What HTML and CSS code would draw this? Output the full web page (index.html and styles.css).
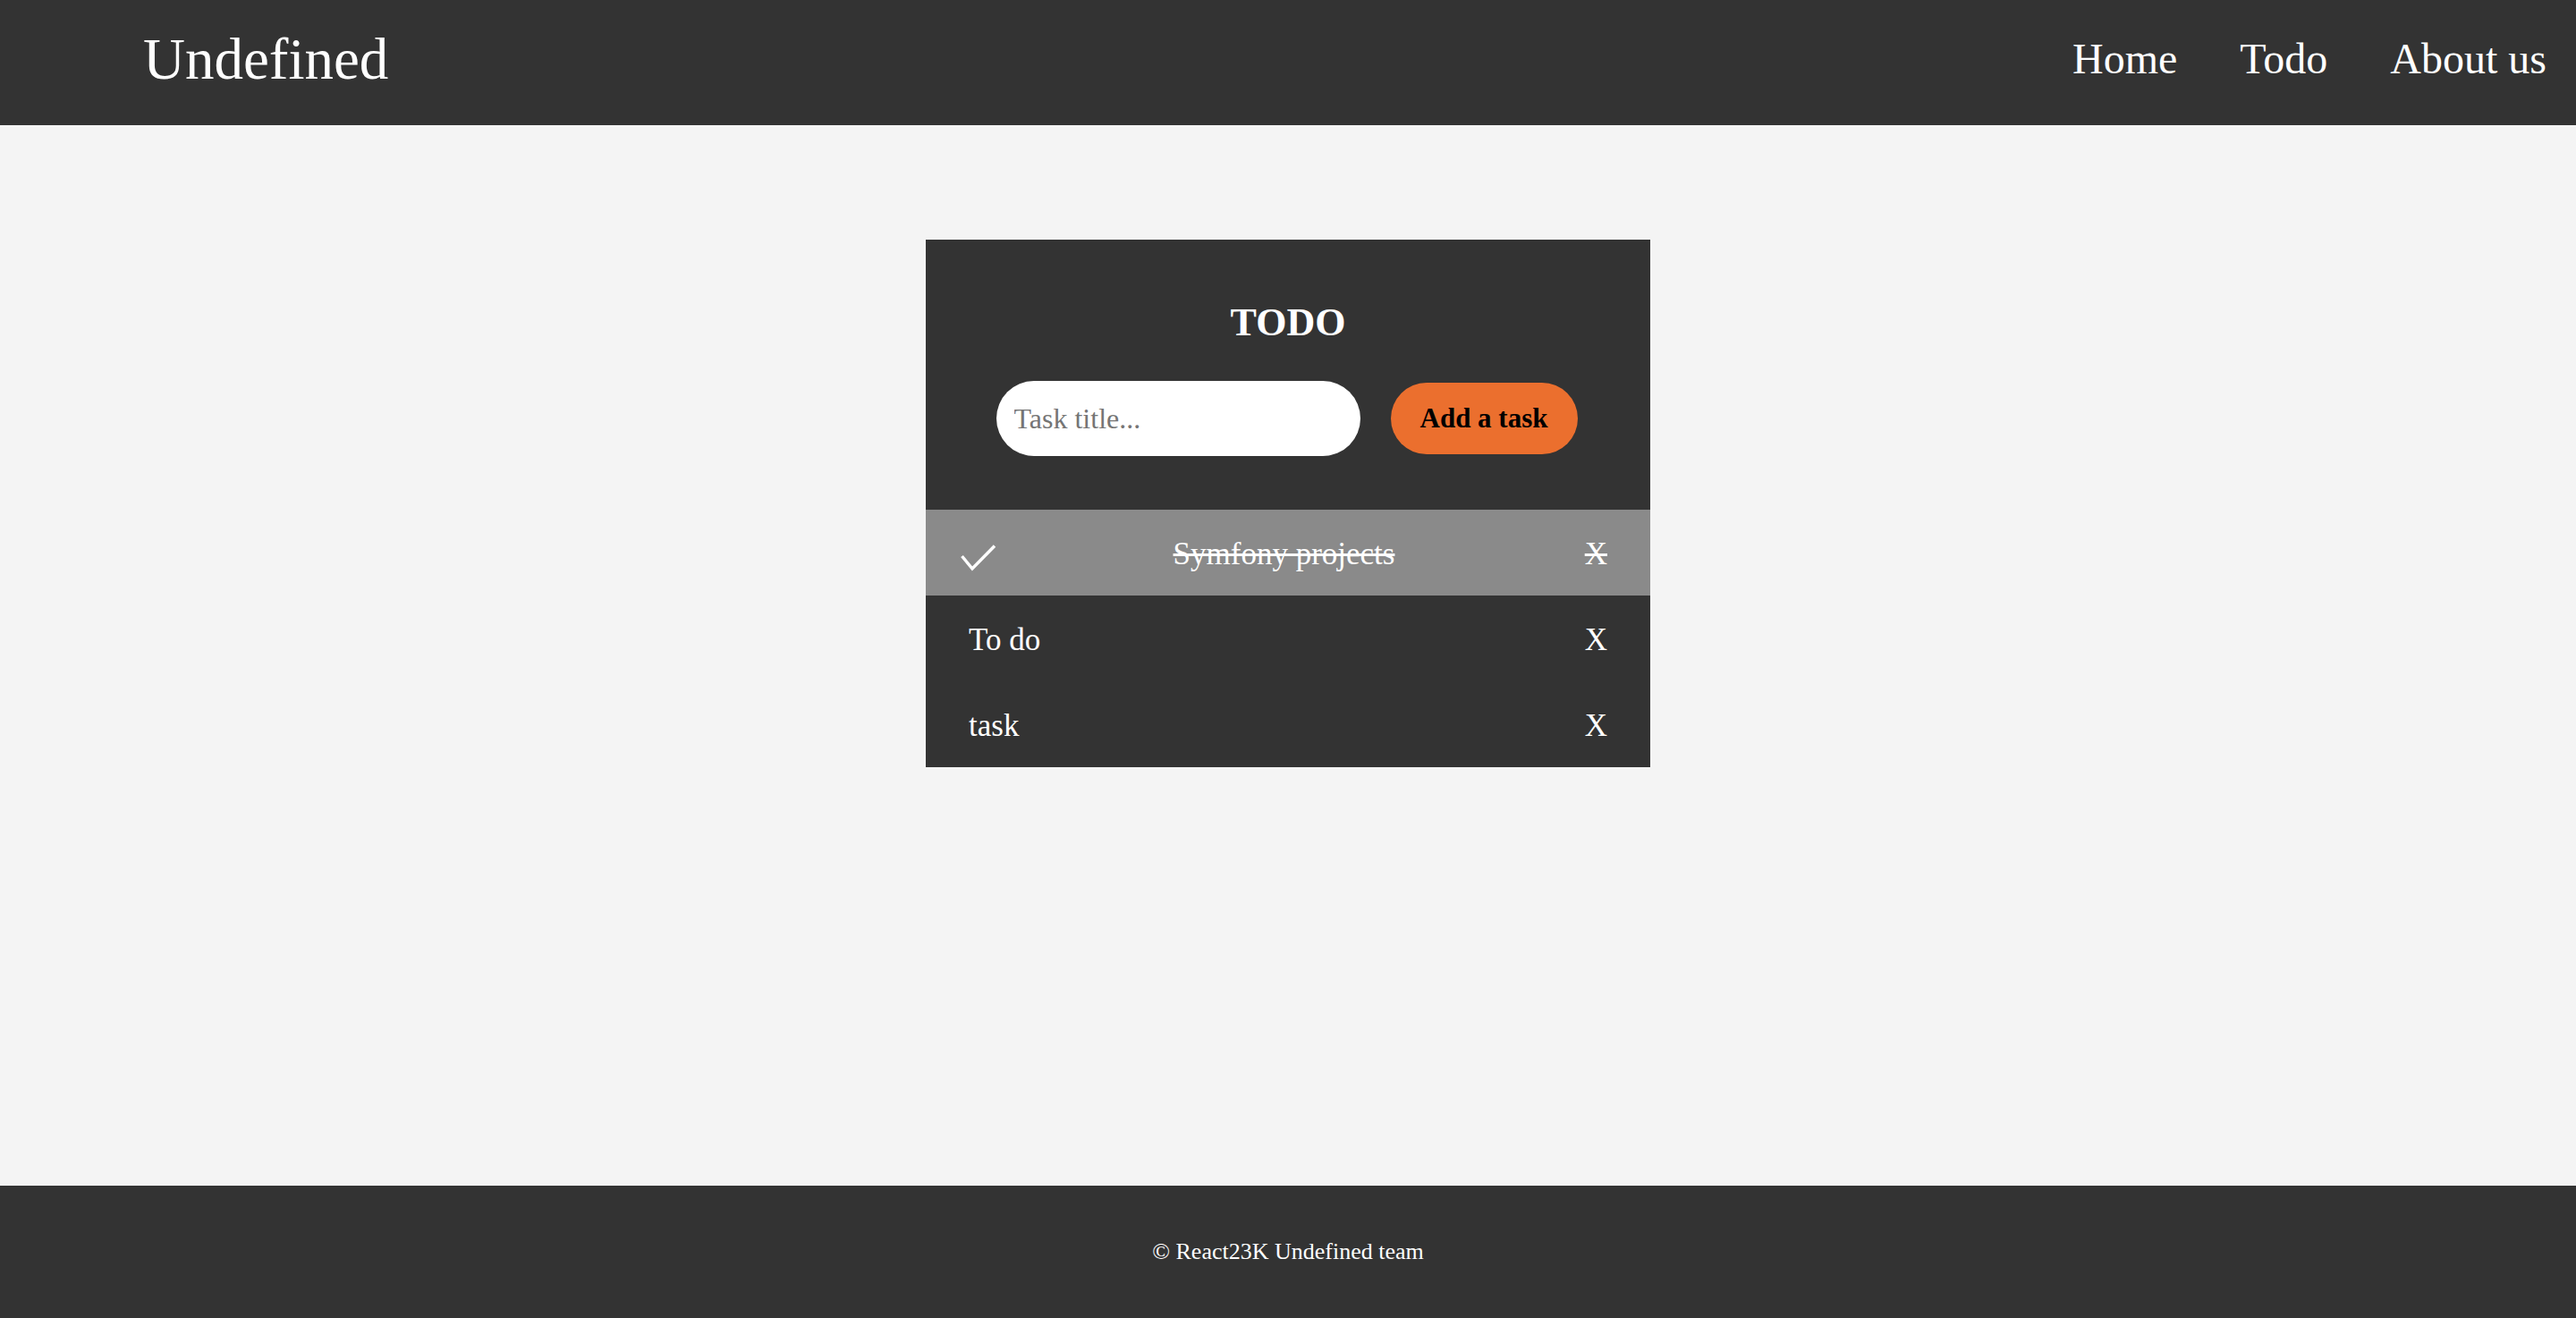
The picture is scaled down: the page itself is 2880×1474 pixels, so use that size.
FILE: index.html
```html
<!DOCTYPE html>
<html lang="en">
<head>
<meta charset="utf-8">
<title>Undefined - Todo</title>
<link rel="stylesheet" href="styles.css">
</head>
<body>
<header class="site-header">
  <div class="logo">Undefined</div>
  <nav class="nav">
    <a class="nav-link" href="#">Home</a>
    <a class="nav-link" href="#">Todo</a>
    <a class="nav-link" href="#">About us</a>
  </nav>
</header>
<main class="main">
  <section class="todo-card">
    <div class="todo-head">
      <h1 class="todo-title">TODO</h1>
      <form class="todo-form">
        <input class="todo-input" type="text" placeholder="Task title...">
        <button class="todo-btn" type="button">Add a task</button>
      </form>
    </div>
    <ul class="todo-list">
      <li class="todo-item done">
        <span class="check"><svg width="40" height="30" viewBox="0 0 40 30"><polyline points="1.5,13 13,27 38,1.5" fill="none" stroke="#fff" stroke-width="3.5"/></svg></span>
        <span class="item-text">Symfony projects</span>
        <span class="remove">X</span>
      </li>
      <li class="todo-item">
        <span class="item-text">To do</span>
        <span class="remove">X</span>
      </li>
      <li class="todo-item">
        <span class="item-text">task</span>
        <span class="remove">X</span>
      </li>
    </ul>
  </section>
</main>
<footer class="site-footer">
  <p class="copy">© React23K Undefined team</p>
</footer>
</body>
</html>
```

FILE: styles.css
```css
* { box-sizing: border-box; }
html, body { height: 100%; }
body {
  margin: 0;
  min-height: 100vh;
  display: flex;
  flex-direction: column;
  background: #f4f4f4;
  font-family: "Liberation Serif", "Times New Roman", serif;
  color: #fff;
}
.site-header {
  height: 140px;
  flex: 0 0 140px;
  background: #333333;
  display: flex;
  align-items: center;
  justify-content: space-between;
  padding: 0 33px 0 160px;
}
.logo {
  font-size: 65px;
  line-height: 1;
  padding-bottom: 7px;
}
.nav {
  display: flex;
  gap: 70px;
  padding-bottom: 8px;
}
.nav-link {
  color: #fff;
  text-decoration: none;
  font-size: 48px;
  line-height: 1;
}
.main {
  flex: 1;
  display: flex;
  justify-content: center;
  align-items: flex-start;
}
.todo-card {
  width: 810px;
  margin-top: 128px;
  background: #333333;
}
.todo-head {
  padding: 71px 0 60px;
  display: flex;
  flex-direction: column;
  align-items: center;
}
.todo-title {
  margin: 0 0 43px;
  font-size: 44px;
  line-height: 1;
  font-weight: 700;
  color: #fff;
}
.todo-form {
  display: flex;
  align-items: center;
  gap: 34px;
  margin-left: -3px;
}
.todo-input {
  width: 407px;
  height: 84px;
  border: none;
  border-radius: 42px;
  background: #fff;
  padding: 0 20px;
  font-family: inherit;
  font-size: 32px;
  color: #333;
  outline: none;
}
.todo-input::placeholder { color: #757575; }
.todo-btn {
  width: 209px;
  height: 80px;
  border: none;
  border-radius: 40px;
  background: #eb6f2e;
  color: #000;
  font-family: inherit;
  font-weight: 700;
  font-size: 31px;
  padding: 0;
}
.todo-list {
  list-style: none;
  margin: 0;
  padding: 0;
}
.todo-item {
  height: 96px;
  display: flex;
  align-items: center;
  justify-content: space-between;
  padding: 3px 48px 0;
  font-size: 35px;
}
.todo-item.done {
  background: #8a8a8a;
  display: grid;
  grid-template-columns: 1fr auto 1fr;
  padding: 3px 48px 0 39px;
  text-decoration: line-through;
}
.check {
  display: flex;
  padding-top: 8px;
}
.todo-item.done .remove { justify-self: end; }
.remove { line-height: 1; }
.item-text { line-height: 1; }
.site-footer {
  flex: 0 0 148px;
  height: 148px;
  background: #333333;
  display: flex;
  align-items: center;
  justify-content: center;
}
.copy {
  margin: 0;
  font-size: 26px;
  color: #fff;
}
```
